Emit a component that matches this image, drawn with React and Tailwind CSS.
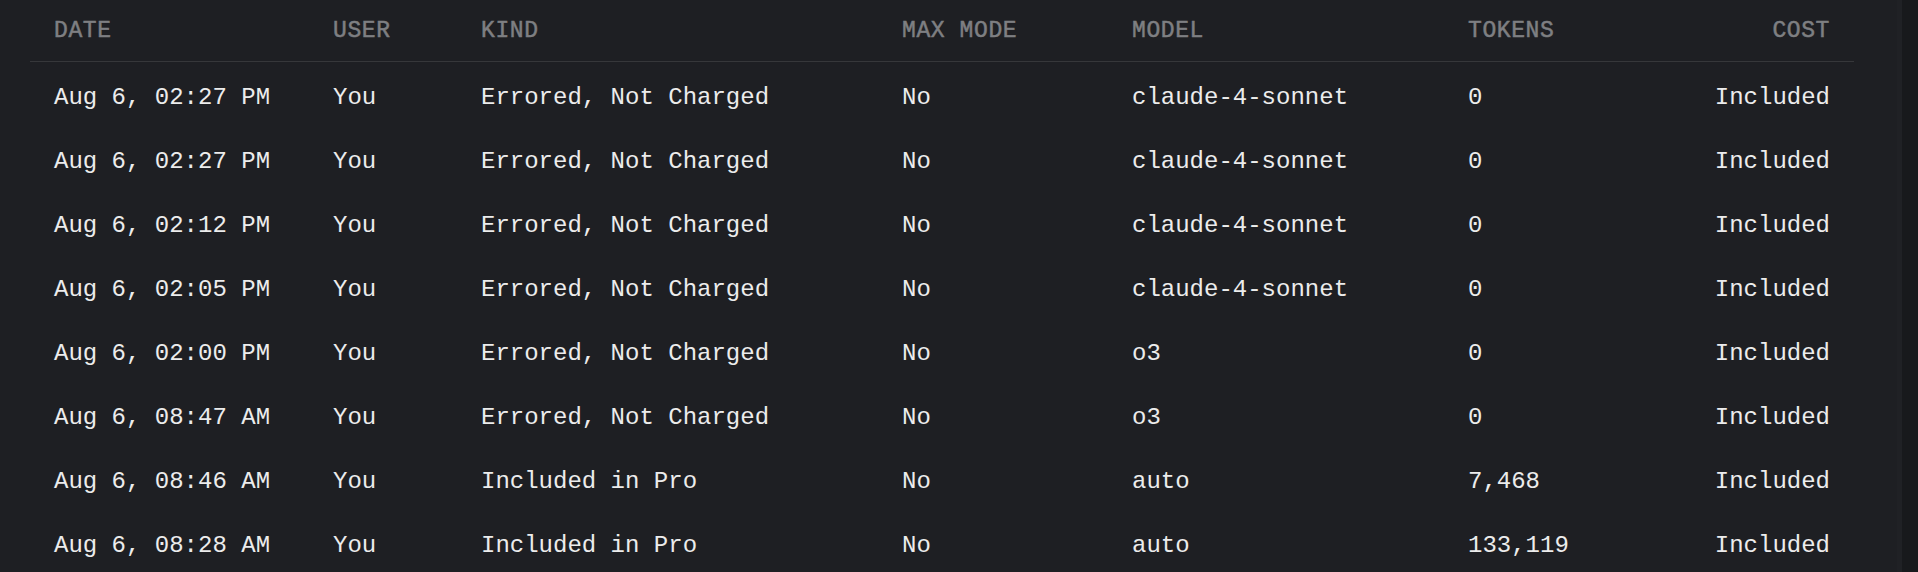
const rows = [
  { date: 'Aug 6, 02:27 PM', user: 'You', kind: 'Errored, Not Charged', max: 'No', model: 'claude-4-sonnet', tokens: '0', cost: 'Included' },
  { date: 'Aug 6, 02:27 PM', user: 'You', kind: 'Errored, Not Charged', max: 'No', model: 'claude-4-sonnet', tokens: '0', cost: 'Included' },
  { date: 'Aug 6, 02:12 PM', user: 'You', kind: 'Errored, Not Charged', max: 'No', model: 'claude-4-sonnet', tokens: '0', cost: 'Included' },
  { date: 'Aug 6, 02:05 PM', user: 'You', kind: 'Errored, Not Charged', max: 'No', model: 'claude-4-sonnet', tokens: '0', cost: 'Included' },
  { date: 'Aug 6, 02:00 PM', user: 'You', kind: 'Errored, Not Charged', max: 'No', model: 'o3', tokens: '0', cost: 'Included' },
  { date: 'Aug 6, 08:47 AM', user: 'You', kind: 'Errored, Not Charged', max: 'No', model: 'o3', tokens: '0', cost: 'Included' },
  { date: 'Aug 6, 08:46 AM', user: 'You', kind: 'Included in Pro', max: 'No', model: 'auto', tokens: '7,468', cost: 'Included' },
  { date: 'Aug 6, 08:28 AM', user: 'You', kind: 'Included in Pro', max: 'No', model: 'auto', tokens: '133,119', cost: 'Included' },
]

// column template shared by header and rows
const cols = 'grid grid-cols-[279px_148px_421px_230px_336px_1fr_auto]'

export default function App() {
  return (
    <div className="flex h-[572px] w-full overflow-hidden bg-[#1e1f23]">
      {/* Usage table */}
      <div className="flex-1 pl-[30px] pr-[43px]">
        <div className="[font-family:'Liberation_Mono',monospace]">
          {/* Header */}
          <div className={`${cols} h-[62px] items-center pt-[2px] border-b border-[#36373a] text-[23px] tracking-[0.6px] text-[#7e7f82] [-webkit-text-stroke:0.5px_#7e7f82]`}>
            <div className="px-6">DATE</div>
            <div className="px-6">USER</div>
            <div className="px-6">KIND</div>
            <div className="px-6">MAX MODE</div>
            <div className="px-6">MODEL</div>
            <div className="px-6">TOKENS</div>
            <div className="px-6 text-right">COST</div>
          </div>

          {/* Rows */}
          {rows.map((r, i) => (
            <div key={i} className={`${cols} h-16 items-center pt-[7px] text-[24px] text-[#ececec]`}>
              <div className="px-6 whitespace-nowrap">{r.date}</div>
              <div className="px-6">{r.user}</div>
              <div className="px-6 whitespace-nowrap">{r.kind}</div>
              <div className="px-6">{r.max}</div>
              <div className="px-6">{r.model}</div>
              <div className="px-6">{r.tokens}</div>
              <div className="px-6 text-right">{r.cost}</div>
            </div>
          ))}
        </div>
      </div>

      {/* Scrollbar track */}
      <div className="w-[21px] border-l-[5px] border-[#202125] bg-[#18191c]" />
    </div>
  )
}
